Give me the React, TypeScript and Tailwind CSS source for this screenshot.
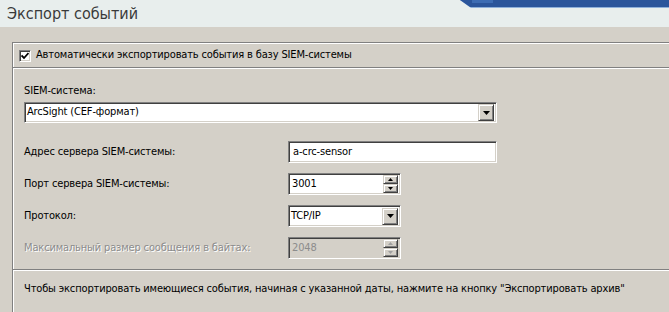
import React from "react";

const font = "font-['DejaVu_Sans_Condensed','DejaVu_Sans',sans-serif]";

const sunken =
  "border border-t-[#808080] border-l-[#808080] border-b-white border-r-white shadow-[inset_1px_1px_0_#404040,inset_-1px_-1px_0_#d4d0c8]";
const raised =
  "border border-t-[#d4d0c8] border-l-[#d4d0c8] border-b-[#404040] border-r-[#404040] shadow-[inset_1px_1px_0_#fff,inset_-1px_-1px_0_#808080] bg-[#d4d0c8]";

function DropArrow() {
  return (
    <div className={`${raised} w-[16px] h-[17px] flex items-center justify-center`}>
      <svg width="7" height="4" viewBox="0 0 7 4">
        <path d="M0 0h7L3.5 4z" fill="#000" />
      </svg>
    </div>
  );
}

function Select({ value, className }: { value: string; className: string }) {
  return (
    <div className={`${sunken} bg-white h-[21px] flex items-center pl-[2px] pr-[2px] ${className}`}>
      <span className="flex-1 text-black">{value}</span>
      <DropArrow />
    </div>
  );
}

function Spin({ value, disabled }: { value: string; disabled?: boolean }) {
  const arrow = disabled ? "#a0a0a0" : "#000";
  return (
    <div
      className={`${sunken} ${disabled ? "bg-[#d4d0c8]" : "bg-white"} w-[113px] h-[22px] flex items-center pl-[3px] pr-[2px]`}
    >
      <span className={`flex-1 ${disabled ? "text-[#8c8c8c]" : "text-black"}`}>{value}</span>
      <div className="flex flex-col">
        <div className={`${raised} w-[15px] h-[9px] flex items-center justify-center`}>
          <svg width="5" height="3" viewBox="0 0 5 3">
            <path d="M2.5 0L5 3H0z" fill={arrow} />
          </svg>
        </div>
        <div className={`${raised} w-[15px] h-[9px] flex items-center justify-center`}>
          <svg width="5" height="3" viewBox="0 0 5 3">
            <path d="M0 0h5L2.5 3z" fill={arrow} />
          </svg>
        </div>
      </div>
    </div>
  );
}

export default function App() {
  return (
    <div className={`${font} w-[669px] h-[312px] overflow-hidden bg-[#d4d0c8] text-[11px] tracking-[-0.15px] text-black flex flex-col`}>
      <div className="relative h-[27px] shrink-0 bg-[#e8eeed] flex items-center pl-[7px]">
        <span className="text-[16px] tracking-normal text-[#3a3a3a] leading-none mt-[1px]">Экспорт событий</span>
        <div className="absolute top-0 right-0 w-[209px] h-[8px] bg-[#8fb0da] [clip-path:polygon(0_0,100%_0,100%_100%,11px_100%)]" />
        <div className="absolute top-0 right-0 w-[209px] h-[7px] bg-[#2b559b] [clip-path:polygon(0_0,100%_0,100%_100%,10px_100%)]" />
        <div className="absolute top-0 left-[472px] w-[21px] h-[3px] bg-[#3d6cb3]" />
      </div>

      <div className="flex-1 pl-[12px] pt-[15px]">
        <div className="h-full border-t border-l border-t-[#808080] border-l-[#808080] shadow-[inset_1px_1px_0_#fff] flex flex-col">
          <div className="h-[25px] flex items-center pl-[6px] pt-[1px] border-b border-b-[#808080] shadow-[0_1px_0_#fff]">
            <div className={`${sunken} bg-white w-[12px] h-[12px] flex items-center justify-center`}>
              <svg width="8" height="8" viewBox="0 0 8 8">
                <path d="M0.5 3.5l2.5 2.5 4.5-5" stroke="#000" strokeWidth="1.8" fill="none" />
              </svg>
            </div>
            <span className="ml-[5px]">Автоматически экспортировать события в базу SIEM-системы</span>
          </div>

          <div className="pl-[11px] pt-[15px] pb-[10px] border-b border-b-[#808080] shadow-[0_1px_0_#fff] mt-[1px]">
            <div className="h-[13px] leading-[13px]">SIEM-система:</div>
            <Select value="ArcSight (CEF-формат)" className="mt-[5px] w-[473px]" />

            <div className="mt-[18px] flex flex-col gap-[10px]">
              <div className="flex items-center">
                <span className="w-[264px]">Адрес сервера SIEM-системы:</span>
                <div className={`${sunken} bg-white w-[209px] h-[22px] flex items-center pl-[4px]`}>a-crc-sensor</div>
              </div>
              <div className="flex items-center">
                <span className="w-[264px]">Порт сервера SIEM-системы:</span>
                <Spin value="3001" />
              </div>
              <div className="flex items-center">
                <span className="w-[264px]">Протокол:</span>
                <Select value="TCP/IP" className="w-[113px] h-[22px]" />
              </div>
              <div className="flex items-center">
                <span className="w-[264px] text-[#8c8c8c] [text-shadow:1px_1px_0_#fff]">
                  Максимальный размер сообщения в байтах:
                </span>
                <Spin value="2048" disabled />
              </div>
            </div>
          </div>

          <div className="pl-[11px] pt-[10px] mt-[1px]">
            Чтобы экспортировать имеющиеся события, начиная с указанной даты, нажмите на кнопку "Экспортировать архив"
          </div>
        </div>
      </div>
    </div>
  );
}
